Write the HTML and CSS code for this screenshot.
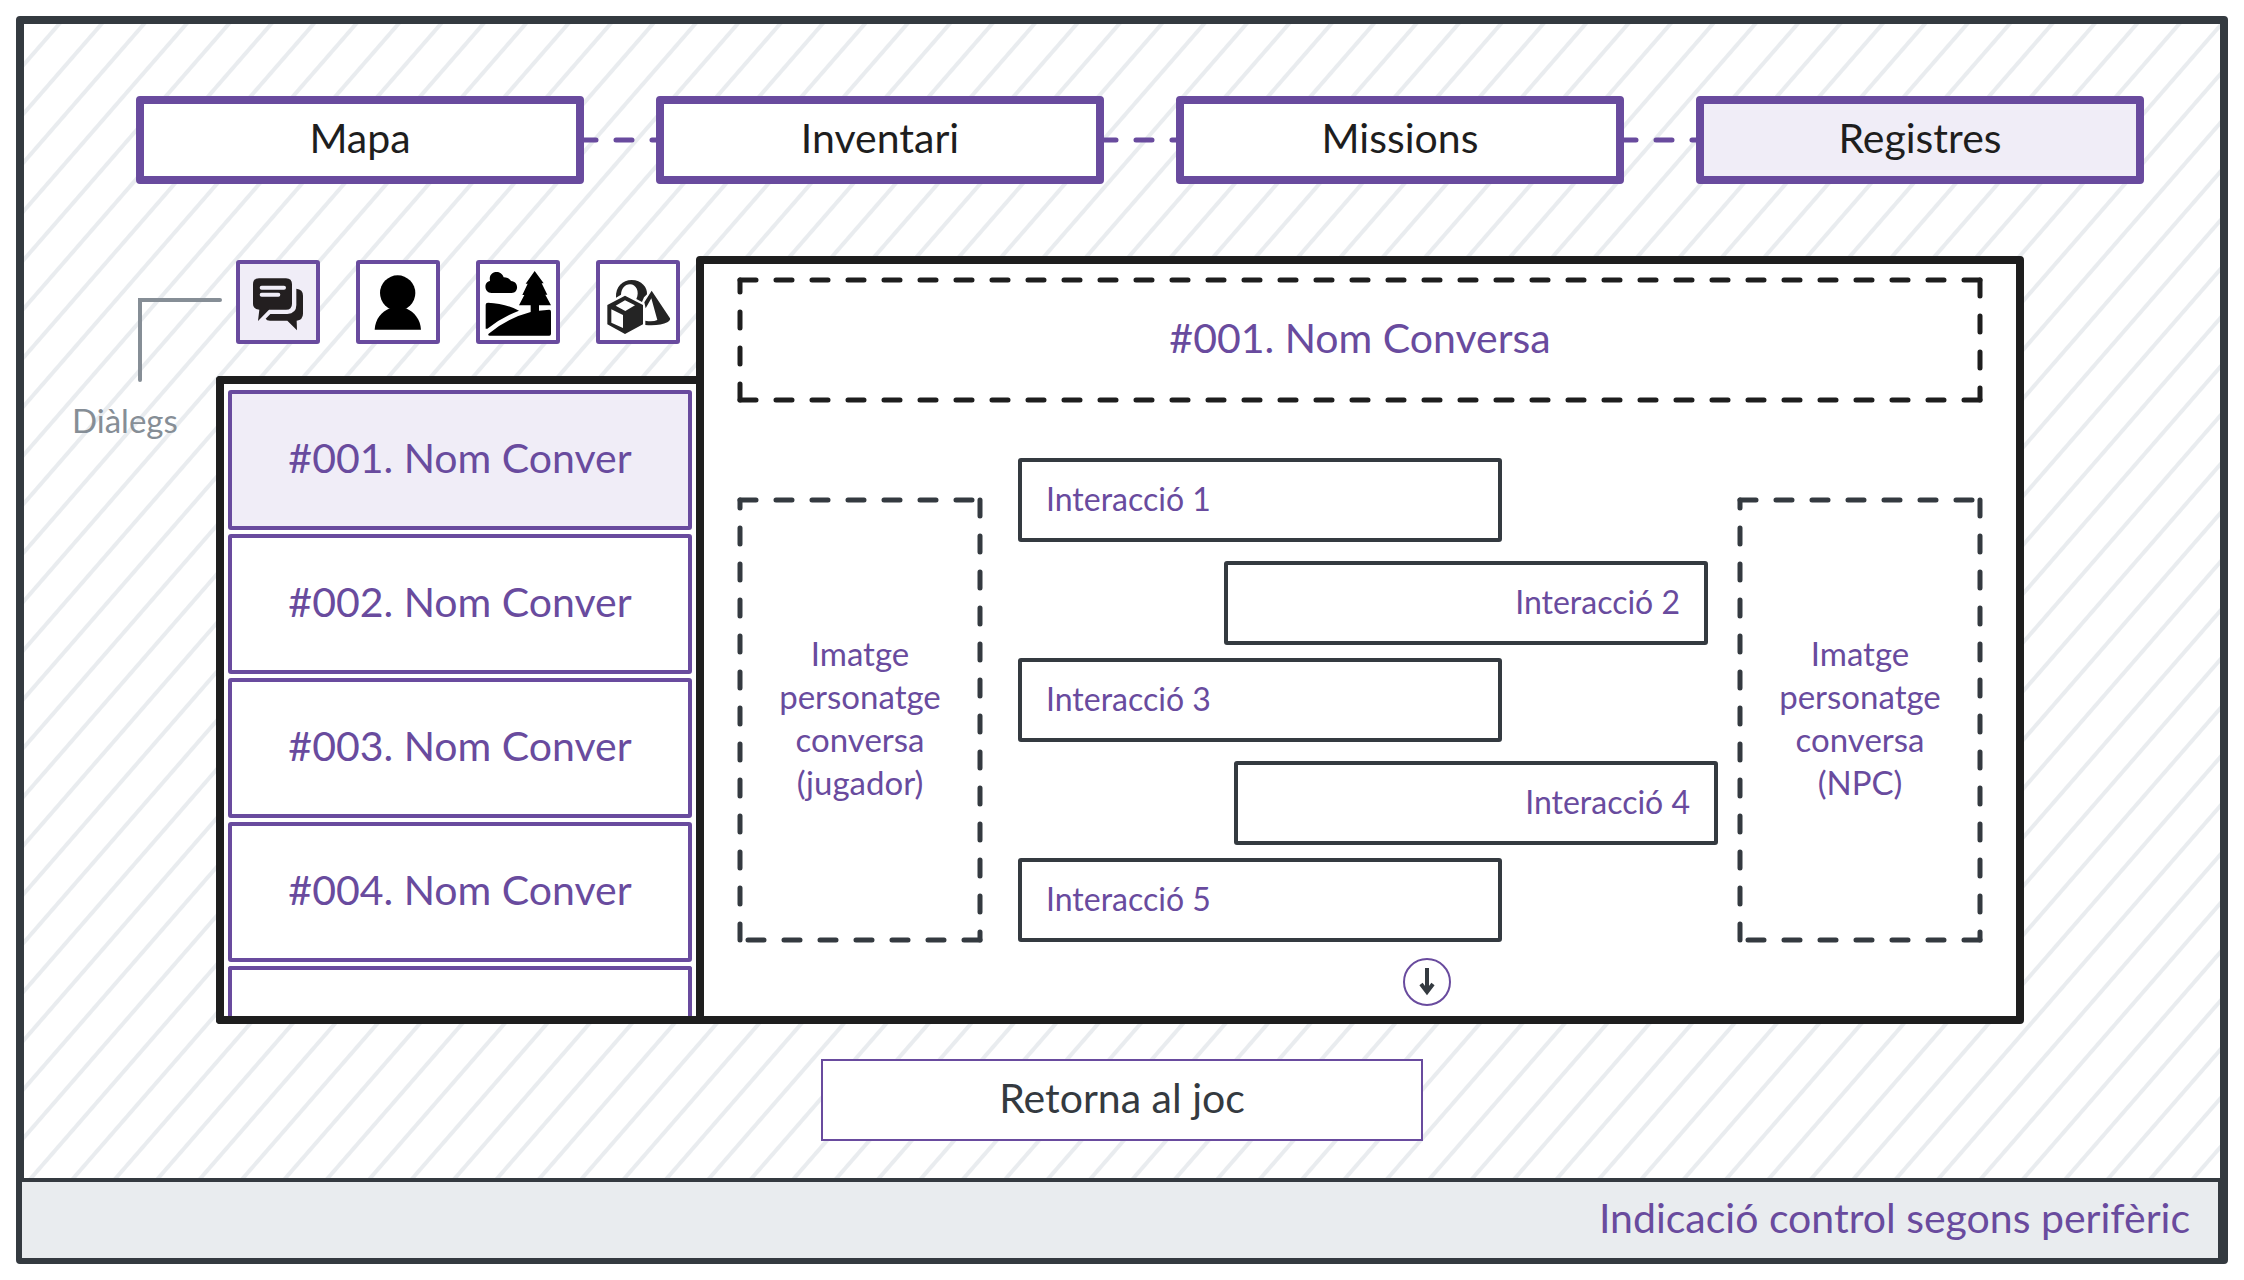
FILE: index.html
```html
<!DOCTYPE html>
<html lang="ca">
<head>
<meta charset="utf-8">
<meta name="viewport" content="width=device-width, initial-scale=1">
<title>Registres</title>
<link rel="stylesheet" href="styles.css">
</head>
<body>
<div class="screen">
  <nav class="tabs" aria-label="Menú principal">
    <button class="tab" type="button">Mapa</button>
    <svg class="tab-link" viewBox="0 0 72 8" aria-hidden="true"><path d="M-4 4H76"/></svg>
    <button class="tab" type="button">Inventari</button>
    <svg class="tab-link" viewBox="0 0 72 8" aria-hidden="true"><path d="M-4 4H76"/></svg>
    <button class="tab" type="button">Missions</button>
    <svg class="tab-link" viewBox="0 0 72 8" aria-hidden="true"><path d="M-4 4H76"/></svg>
    <button class="tab tab--active" type="button" aria-current="page">Registres</button>
  </nav>

  <main class="workspace">
    <aside class="callout">
      <svg class="callout-line" viewBox="0 0 88 84" aria-hidden="true"><path d="M2 82V2H82"/></svg>
      <p class="callout-text">Diàlegs</p>
    </aside>

    <section class="records">
      <div class="filters">
        <button class="filter filter--active" type="button" aria-label="Diàlegs">
          <svg viewBox="60 57 228 228" aria-hidden="true">
            <path fill="#231f20" d="M117 100H198Q216 100 216 118V176Q216 194 198 194H147L114 228L118 194Q99 192 99 176V118Q99 100 117 100Z"/>
            <path fill="#231f20" d="M229 131Q249 133 249 152V206Q249 224 230 227L231 256L202 227H150Q140 227 137 221L151 207H202Q229 205 229 180Z"/>
            <path stroke="#f0edf7" stroke-width="12" stroke-linecap="round" d="M125 128H192M125 149H175"/>
          </svg>
        </button>
        <button class="filter" type="button" aria-label="Personatges">
          <svg viewBox="420 57 228 228" aria-hidden="true">
            <circle cx="533" cy="144" r="53"/>
            <path d="M464 254C466 222 484 200 510 190H558C584 202 601 224 603 254Z"/>
          </svg>
        </button>
        <button class="filter" type="button" aria-label="Llocs">
          <svg viewBox="60 57 228 228" aria-hidden="true">
            <path d="M95 144C71 144 71 110 90 108C86 88 100 81 110 81C122 81 128 89 131 97C144 97 150 104 153 108C177 109 177 144 155 144Z"/>
            <path d="M224 78L251 115H245L262 149H256L273 181H237V197L268 194Q273 194 273 200V266Q273 272 268 272H90Q82 272 86 266Q140 220 212 201V181H177L193 150H187L203 116H197Z"/>
            <path d="M77 179Q77 173 84 173Q135 175 177 197Q125 217 82 251H77Z"/>
          </svg>
        </button>
        <button class="filter" type="button" aria-label="Objectes">
          <svg viewBox="420 57 228 228" aria-hidden="true">
            <path fill="#242424" d="M468 158C466 125 488 105 515 105C545 105 563 128 561 148L552 157L546 171L529 162C540 140 528 118 510 118C494 118 484 132 483 149Z"/>
            <path fill="#242424" fill-rule="evenodd" d="M495 152L549 180V238L495 267L442 238V180ZM495 166L467 182L496 198L525 181ZM454 193V233L489 249V210Z"/>
            <path fill="#242424" d="M575 137L630 220Q632 226 622 232Q600 243 556 240V227Q578 231 592 225L574 160L557 190L553 172Z"/>
          </svg>
        </button>
      </div>
      <ul class="record-list">
        <li><button class="record record--active" type="button">#001. Nom Conver</button></li>
        <li><button class="record" type="button">#002. Nom Conver</button></li>
        <li><button class="record" type="button">#003. Nom Conver</button></li>
        <li><button class="record" type="button">#004. Nom Conver</button></li>
        <li><div class="record record--cut"></div></li>
      </ul>
    </section>

    <article class="panel">
      <header class="dashed panel-head">
        <svg class="dashes" aria-hidden="true">
          <line x1="0" y1="0" x2="100%" y2="0"/><line x1="100%" y1="0" x2="100%" y2="100%"/>
          <line x1="100%" y1="100%" x2="0" y2="100%"/><line x1="0" y1="100%" x2="0" y2="0"/>
        </svg>
        <h1 class="panel-title">#001. Nom Conversa</h1>
      </header>
      <div class="conversation">
        <div class="dashed portrait">
          <svg class="dashes" aria-hidden="true">
            <line x1="0" y1="0" x2="100%" y2="0"/><line x1="100%" y1="0" x2="100%" y2="100%"/>
            <line x1="100%" y1="100%" x2="0" y2="100%"/><line x1="0" y1="100%" x2="0" y2="0"/>
          </svg>
          <p>Imatge personatge conversa (jugador)</p>
        </div>
        <div class="chat">
          <p class="bubble">Interacció 1</p>
          <p class="bubble bubble--reply bubble--inset">Interacció 2</p>
          <p class="bubble">Interacció 3</p>
          <p class="bubble bubble--reply">Interacció 4</p>
          <p class="bubble">Interacció 5</p>
          <button class="more" type="button" aria-label="Més interaccions">
            <svg viewBox="0 0 44 44" aria-hidden="true"><path d="M22 8V32M16 24L22 32L28 24"/></svg>
          </button>
        </div>
        <div class="dashed portrait">
          <svg class="dashes" aria-hidden="true">
            <line x1="0" y1="0" x2="100%" y2="0"/><line x1="100%" y1="0" x2="100%" y2="100%"/>
            <line x1="100%" y1="100%" x2="0" y2="100%"/><line x1="0" y1="100%" x2="0" y2="0"/>
          </svg>
          <p>Imatge personatge conversa (NPC)</p>
        </div>
      </div>
    </article>
  </main>

  <button class="back" type="button">Retorna al joc</button>

  <footer class="hint">Indicació control segons perifèric</footer>
</div>
</body>
</html>
```
FILE: styles.css
```css
:root {
  --purple: #694b9e;
  --lilac: #f0edf7;
  --ink: #1e1e1e;
  --slate: #343a40;
  --grey: #868e96;
  --mist: #e9ecef;
}

* { box-sizing: border-box; }

body {
  margin: 0;
  padding: 16px;
  background: #fff;
  color: var(--ink);
  font-family: Lato, "Noto Sans", sans-serif;
  font-size: 41px;
  line-height: 54px;
}

h1, p, ul { margin: 0; padding: 0; }
ul { list-style: none; }

button {
  font: inherit;
  color: inherit;
  margin: 0;
  padding: 0;
  background: #fff;
}

.screen {
  display: flex;
  flex-direction: column;
  border: 8px solid var(--slate);
  border-radius: 4px;
  background: repeating-linear-gradient(131deg,
    #fff 0, #fff 24px, var(--mist) 25px, var(--mist) 28px, #fff 29px, #fff 32px);
}

.tabs {
  display: flex;
  align-items: center;
  padding: 72px 76px 72px 112px;
}

.tab {
  flex: 1;
  height: 88px;
  padding-bottom: 4px;
  border: 8px solid var(--purple);
  border-radius: 4px;
}

.tab--active { background: var(--lilac); }

.tab-link {
  flex: none;
  width: 72px;
  height: 8px;
}

.tab-link path {
  stroke: var(--purple);
  stroke-width: 5;
  stroke-linecap: round;
  stroke-dasharray: 16 20;
}

.workspace {
  display: flex;
  padding: 0 196px 0 48px;
}

.callout {
  flex: 0 0 144px;
  padding-top: 42px;
  color: var(--grey);
  font-size: 33px;
  line-height: 43px;
}

.callout-line {
  display: block;
  width: 88px;
  height: 84px;
  margin: 0 -10px 17px 66px;
  fill: none;
  stroke: var(--grey);
  stroke-width: 4;
  stroke-linecap: round;
}

.records {
  flex: 0 0 480px;
  display: flex;
  flex-direction: column;
}

.filters {
  display: flex;
  gap: 36px;
  padding: 4px 0 32px 20px;
}

.filter {
  flex: none;
  width: 84px;
  height: 84px;
  border: 4px solid var(--purple);
  border-radius: 3px;
}

.filter svg { display: block; width: 100%; height: 100%; }
.filter--active { background: var(--lilac); }

.record-list {
  flex: 1;
  display: flex;
  flex-direction: column;
  gap: 4px;
  padding: 6px 4px 0;
  border: 8px solid var(--ink);
  border-right: 0;
  border-radius: 4px 0 0 4px;
  background: #fff;
}

.record {
  display: block;
  width: 100%;
  height: 140px;
  padding-bottom: 4px;
  border: 4px solid var(--purple);
  border-radius: 3px;
  color: var(--purple);
}

.record--active { background: var(--lilac); }

.record--cut {
  height: 50px;
  border-bottom: 0;
  border-radius: 3px 3px 0 0;
}

.panel {
  flex: 1;
  padding: 16px 36px 10px;
  border: 8px solid var(--ink);
  border-radius: 4px 4px 4px 0;
  background: #fff;
}

.dashed {
  position: relative;
  display: flex;
  align-items: center;
  justify-content: center;
  padding: 0 32px 4px;
  text-align: center;
  color: var(--purple);
}

.dashes {
  position: absolute;
  inset: 0;
  width: 100%;
  height: 100%;
  overflow: visible;
  stroke: var(--slate);
  stroke-width: 5;
  stroke-linecap: round;
  stroke-dasharray: 16 20;
}

.panel-head {
  height: 120px;
  margin-bottom: 58px;
}

.panel-head .dashes { stroke: var(--ink); }

.panel-title {
  font-size: 41px;
  font-weight: 400;
}

.conversation {
  display: grid;
  grid-template-columns: 240px 1fr 240px;
  align-items: start;
}

.portrait {
  height: 440px;
  margin-top: 42px;
  font-size: 33px;
  line-height: 43px;
}

.chat {
  display: flex;
  flex-direction: column;
  align-items: flex-start;
  gap: 16px;
  padding: 0 22px 0 38px;
}

.bubble {
  width: 484px;
  height: 84px;
  padding: 0 24px;
  border: 4px solid var(--slate);
  border-radius: 3px;
  background: #fff;
  color: var(--purple);
  font-size: 32px;
  line-height: 74px;
}

.bubble--reply {
  align-self: flex-end;
  margin: 3px 0 -3px;
  text-align: right;
}

.bubble--inset { margin-right: 10px; }

.more {
  width: 48px;
  height: 48px;
  margin-left: 55%;
  border: 2px solid var(--purple);
  border-radius: 50%;
}

.more svg {
  display: block;
  width: 100%;
  height: 100%;
  fill: none;
  stroke: var(--slate);
  stroke-width: 4;
}

.back {
  align-self: center;
  width: 602px;
  height: 82px;
  margin: 35px 0 37px;
  padding-bottom: 4px;
  border: 2px solid var(--purple);
  color: var(--slate);
}

.hint {
  margin: 0 -2px -6px -6px;
  padding: 9px 28px 13px;
  border: 4px solid var(--slate);
  background: var(--mist);
  color: var(--purple);
  text-align: right;
}
```
